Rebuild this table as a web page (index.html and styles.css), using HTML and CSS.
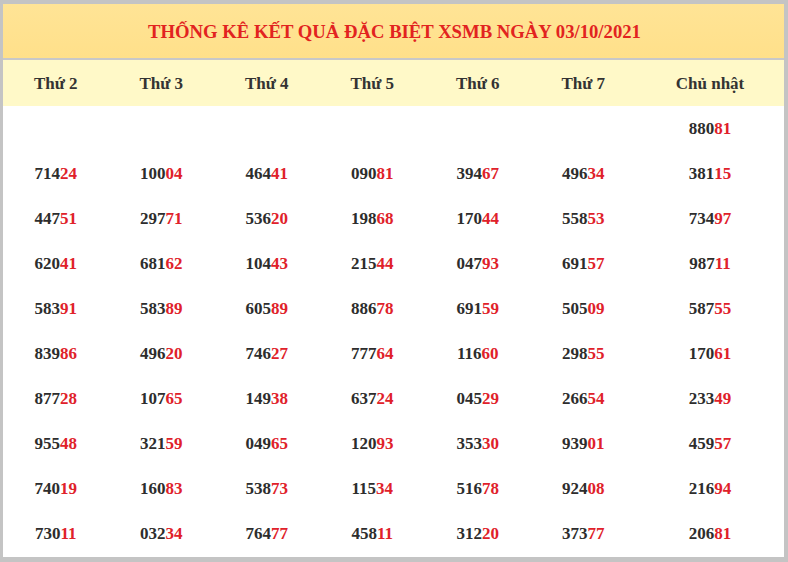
FILE: index.html
```html
<!DOCTYPE html>
<html lang="vi">
<head>
<meta charset="utf-8">
<title>Thống kê</title>
<link rel="stylesheet" href="styles.css">
</head>
<body>
<div class="board">
  <div class="title">THỐNG KÊ KẾT QUẢ ĐẶC BIỆT XSMB NGÀY 03/10/2021</div>
  <div class="grid head">
    <div>Thứ 2</div><div>Thứ 3</div><div>Thứ 4</div><div>Thứ 5</div><div>Thứ 6</div><div>Thứ 7</div><div>Chủ nhật</div>
  </div>
  <div class="grid body">
    <div></div><div></div><div></div><div></div><div></div><div></div><div>880<b>81</b></div>
    <div>714<b>24</b></div><div>100<b>04</b></div><div>464<b>41</b></div><div>090<b>81</b></div><div>394<b>67</b></div><div>496<b>34</b></div><div>381<b>15</b></div>
    <div>447<b>51</b></div><div>297<b>71</b></div><div>536<b>20</b></div><div>198<b>68</b></div><div>170<b>44</b></div><div>558<b>53</b></div><div>734<b>97</b></div>
    <div>620<b>41</b></div><div>681<b>62</b></div><div>104<b>43</b></div><div>215<b>44</b></div><div>047<b>93</b></div><div>691<b>57</b></div><div>987<b>11</b></div>
    <div>583<b>91</b></div><div>583<b>89</b></div><div>605<b>89</b></div><div>886<b>78</b></div><div>691<b>59</b></div><div>505<b>09</b></div><div>587<b>55</b></div>
    <div>839<b>86</b></div><div>496<b>20</b></div><div>746<b>27</b></div><div>777<b>64</b></div><div>116<b>60</b></div><div>298<b>55</b></div><div>170<b>61</b></div>
    <div>877<b>28</b></div><div>107<b>65</b></div><div>149<b>38</b></div><div>637<b>24</b></div><div>045<b>29</b></div><div>266<b>54</b></div><div>233<b>49</b></div>
    <div>955<b>48</b></div><div>321<b>59</b></div><div>049<b>65</b></div><div>120<b>93</b></div><div>353<b>30</b></div><div>939<b>01</b></div><div>459<b>57</b></div>
    <div>740<b>19</b></div><div>160<b>83</b></div><div>538<b>73</b></div><div>115<b>34</b></div><div>516<b>78</b></div><div>924<b>08</b></div><div>216<b>94</b></div>
    <div>730<b>11</b></div><div>032<b>34</b></div><div>764<b>77</b></div><div>458<b>11</b></div><div>312<b>20</b></div><div>373<b>77</b></div><div>206<b>81</b></div>
  </div>
</div>
</body>
</html>
```
FILE: styles.css
```css
html, body {
  margin: 0;
  padding: 0;
  background: #ffffff;
}
body {
  font-family: "Liberation Serif", "Times New Roman", serif;
  font-weight: bold;
  color: #333333;
}
.board {
  width: 788px;
  height: 562px;
  box-sizing: border-box;
  border-style: solid;
  border-color: #c4c4c4;
  border-width: 4px 4px 5px 3px;
  background: #ffffff;
}
.title {
  box-sizing: border-box;
  height: 56px;
  display: flex;
  align-items: center;
  justify-content: center;
  background: linear-gradient(#ffe496, #ffe08a);
  color: #e2231f;
  font-size: 18.7px;
  border-bottom: 2px solid #c8c8c8;
  padding-left: 2px;
  padding-top: 1px;
}
.grid {
  display: grid;
  grid-template-columns: repeat(6, 105.5px) 1fr;
}
.grid > div {
  display: flex;
  align-items: center;
  justify-content: center;
  font-size: 17px;
}
.head {
  background: #fff9c8;
}
.head > div {
  box-sizing: border-box;
  height: 46px;
  padding-top: 1px;
  color: #333333;
}
.body > div {
  height: 45px;
  color: #2d2d2d;
}
.body b {
  color: #e0212a;
}
```
